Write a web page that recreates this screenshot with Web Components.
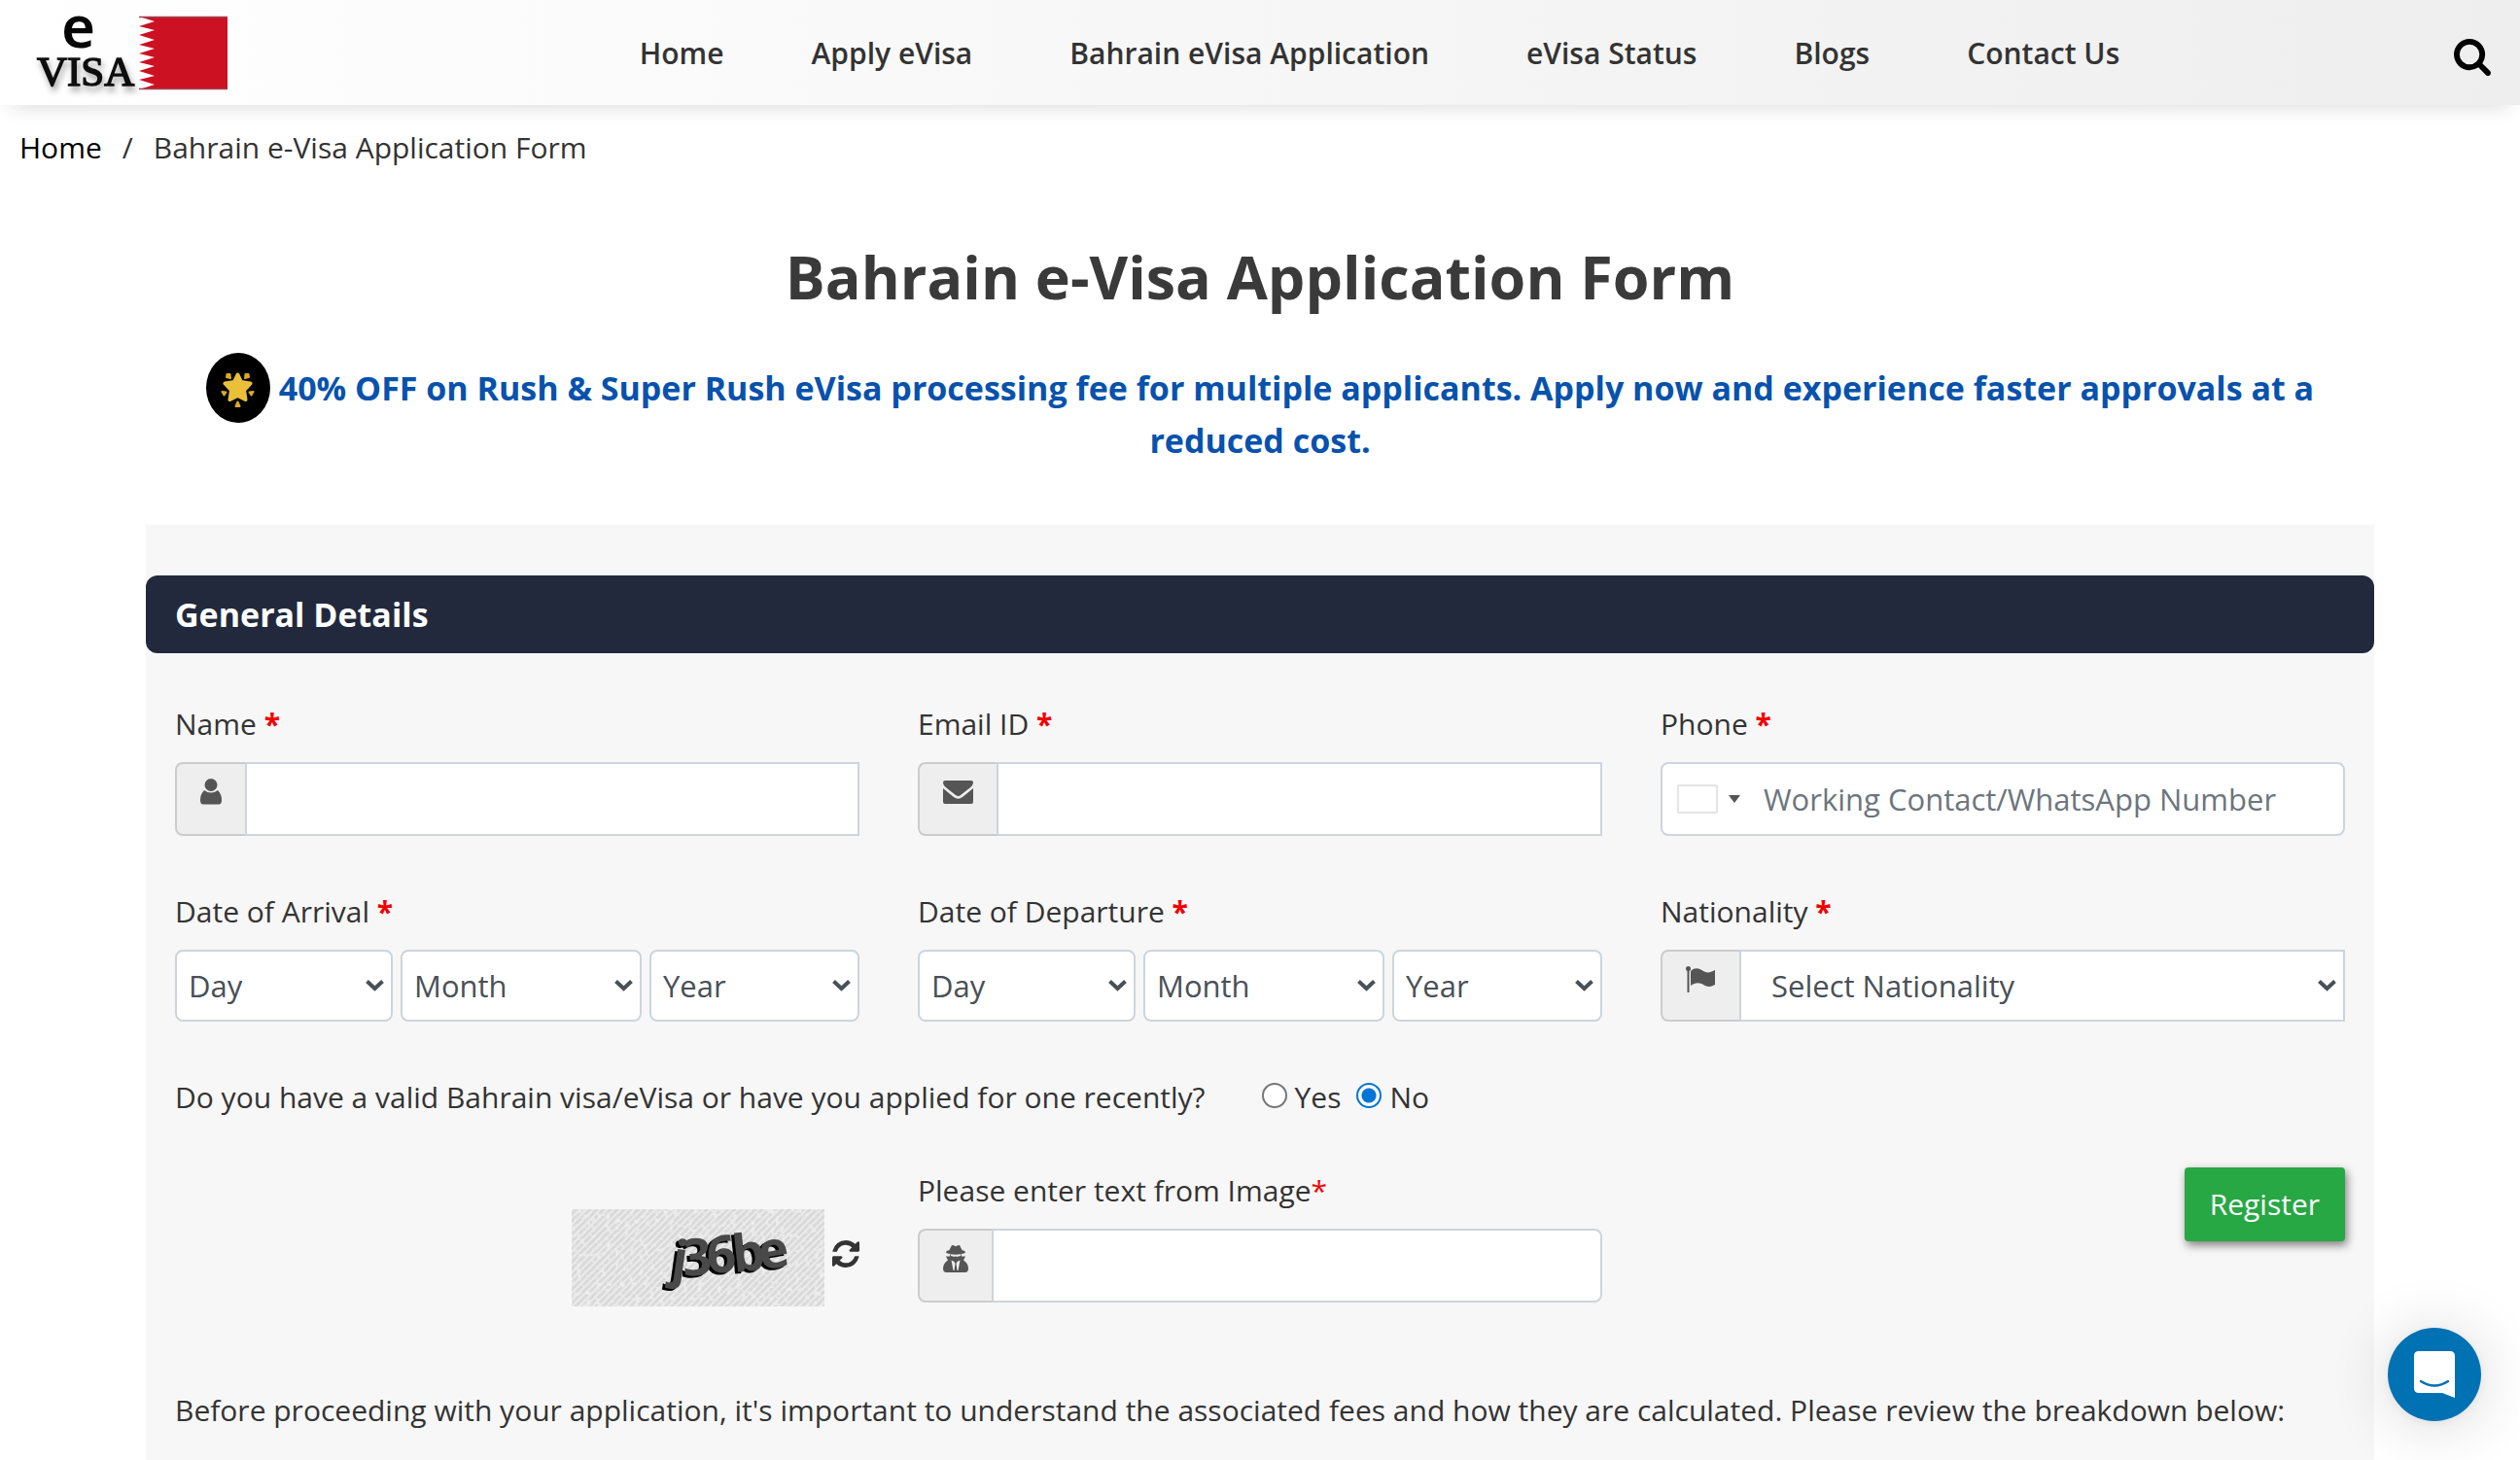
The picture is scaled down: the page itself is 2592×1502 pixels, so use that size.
<!DOCTYPE html>
<html lang="en">
<head>
<meta charset="utf-8">
<meta name="viewport" content="width=device-width, initial-scale=1">
<title>Bahrain e-Visa Application Form</title>
<style>
  :root {
    --ink: #333;
    --line: #ced4da;
    --field-ink: #495057;
    --text: 30px;
    --control: 31px;
    --lead: 34px;
    --red: #f00000;
  }
  body {
    margin: 0;
    background: #fff;
    color: var(--ink);
    font: 400 var(--text)/48px "Open Sans", "Noto Sans", sans-serif;
  }
</style>
</head>
<body>
<visa-page>
  <site-header slot="header"></site-header>
  <bread-crumb slot="crumb" current="Bahrain e-Visa Application Form"></bread-crumb>
  <promo-banner slot="promo">40% OFF on Rush &amp; Super Rush eVisa processing fee for multiple applicants. Apply now and experience faster approvals at a reduced cost.</promo-banner>
  <visa-form></visa-form>
  <chat-launcher slot="chat"></chat-launcher>
</visa-page>

<script>
const define = (name, markup, setup) => {
  const template = document.createElement('template');
  template.innerHTML = markup;
  customElements.define(name, class extends HTMLElement {
    constructor() {
      super();
      this.attachShadow({ mode: 'open' }).append(template.content.cloneNode(true));
    }
    connectedCallback() { if (setup) setup(this, this.shadowRoot); }
  });
};

const fieldStyles = `
  *, *::before { box-sizing: border-box; }
  :host { display: block; min-width: 0; }
  .label { display: block; margin-bottom: 15px; }
  .star { color: var(--red); font-weight: 700; }
  .group { display: flex; }
  .addon {
    display: flex; flex: none; justify-content: center; align-items: flex-start;
    padding: 15px 24px 0; background: #eee; color: #555;
    border: 2px solid #ccc; border-right: 0; border-radius: 8px 0 0 8px;
  }
  .addon svg, .addon ::slotted(svg) { display: block; fill: currentColor; }
  input, select {
    font: inherit; font-size: var(--control); color: var(--field-ink); background: #fff; margin: 0;
    border: 2px solid var(--line); border-radius: 8px; min-width: 0; width: 100%; height: 76px;
  }
  select { appearance: none; height: 74px; padding: 0 36px 0 12px; }
  .pick { display: grid; min-width: 0; align-items: center; }
  .pick > * { grid-area: 1 / 1; }
  .pick svg { justify-self: end; margin-right: 9px; pointer-events: none; }
`;
const chevron = `<svg width="19" height="12" viewBox="0 0 19 12" fill="none" stroke="#495057" stroke-width="4"><path d="M1.5 1.5 9.5 9 17.5 1.5"/></svg>`;

define('visa-page', `
  <style>
    :host { display: flex; flex-direction: column; min-height: 100vh; }
    main { display: flex; flex-direction: column; flex: 1; width: calc(100% - 80px); max-width: 2292px; margin: 0 auto; }
    h1 { margin: 70px 0 49px; text-align: center; font-size: 61px; line-height: 77px; font-weight: 700; color: #3a3a3a; }
    .body { display: flex; flex-direction: column; flex: 1; }
  </style>
  <slot name="header"></slot>
  <slot name="crumb"></slot>
  <main>
    <h1>Bahrain e-Visa Application Form</h1>
    <slot name="promo"></slot>
    <div class="body"><slot></slot></div>
  </main>
  <slot name="chat"></slot>
`);

define('site-header', `
  <style>
    :host { display: block; position: relative; }
    header {
      display: flex; align-items: center; height: 108px; padding: 0 30px 0 36px;
      background: linear-gradient(90deg, #fff, #eee);
      box-shadow: 0 12px 20px -12px rgba(0,0,0,.17);
    }
    .logo { display: block; flex: none; }
    .logo svg { display: block; overflow: visible; }
    nav { flex: 1; display: flex; justify-content: center; gap: 100px; padding: 2px 0 0 78px; }
    nav a { color: #333; text-decoration: none; font-weight: 600; white-space: nowrap; }
    nav a:first-child { margin-right: -10px; }
    button { flex: none; padding: 0; border: 0; background: none; margin-top: 10px; }
    button svg { display: block; }
  </style>
  <header>
    <a class="logo" href="#" aria-label="e Visa Bahrain">
      <svg width="200" height="108" viewBox="36 0 200 108">
        <defs><filter id="s" x="-20%" y="-20%" width="140%" height="160%"><feDropShadow dx="2" dy="5" stdDeviation="3" flood-opacity=".35"/></filter></defs>
        <text x="63" y="49" font-family="Noto Sans, sans-serif" font-size="60" font-weight="600" fill="#050505">e</text>
        <text x="38" y="88" font-family="Liberation Serif, serif" font-size="43" fill="#111" stroke="#111" stroke-width="1.5" filter="url(#s)">VISA</text>
        <path fill="#cb1122" d="M234 17H143L159 22 143 27 159 31 143 36 159 41 143 46 159 50 143 55 159 59 143 64 159 68 143 73 159 78 143 82 159 87 143 92H234z"/>
        <path stroke="#a04455" stroke-width="1.5" d="M143 17.5h91M143 91.5h91"/>
      </svg>
    </a>
    <nav aria-label="Main">
      <a href="#">Home</a><a href="#">Apply eVisa</a><a href="#">Bahrain eVisa Application</a><a href="#">eVisa Status</a><a href="#">Blogs</a><a href="#">Contact Us</a>
    </nav>
    <button type="button" aria-label="Search">
      <svg width="38" height="38" viewBox="64 128 1664 1664"><path d="M1216 832q0-185-131.5-316.5t-316.5-131.5-316.5 131.5-131.5 316.5 131.5 316.5 316.5 131.5 316.5-131.5 131.5-316.5zm512 832q0 52-38 90t-90 38q-54 0-90-38l-343-342q-179 124-399 124-143 0-273.5-55.5t-225-150-150-225-55.5-273.5 55.5-273.5 150-225 225-150 273.5-55.5 273.5 55.5 225 150 150 225 55.5 273.5q0 220-124 399l343 343q37 37 37 90z"/></svg>
    </button>
  </header>
`);

define('bread-crumb', `
  <style>
    :host { display: block; padding: 20px 20px 0; }
    ol { display: flex; flex-wrap: wrap; gap: 21px; margin: 0; padding: 0; list-style: none; }
    a { color: #000; text-decoration: none; }
  </style>
  <nav aria-label="Breadcrumb"><ol><li><a href="#">Home</a></li><li aria-hidden="true">/</li><li class="current"></li></ol></nav>
`, (host, root) => { root.querySelector('.current').textContent = host.getAttribute('current'); });

define('promo-banner', `
  <style>
    :host { display: block; margin: 0 0 60px; padding: 0 30px; text-align: center; }
    p { margin: 0; color: #0752ad; font-weight: 700; font-size: var(--lead); line-height: 54px; }
    svg { vertical-align: middle; margin: -19px 0 -11px; }
  </style>
  <p><svg width="66" height="72" viewBox="0 0 66 72" aria-hidden="true">
    <ellipse cx="33" cy="36" rx="33" ry="36"/>
    <path d="M32.500 22.500 36 30l9.500 1.500-6.500 7 1.500 9.500-8-4-8 4 1.500-9.500-6.500-7L29 30z" fill="#eac03a" stroke="#eac03a" stroke-width="4" stroke-linejoin="round"/>
    <g fill="#dba92a" stroke="#dba92a" stroke-width="2" stroke-linejoin="round"><path d="M21.500 22l3 0 .5 4-4-1zM43.500 22l-3 0-.5 4 4-1zM16.500 40l4 .5-2 3zM48.500 40l-4 .5 2 3zM32.500 50.500l2 4.500h-4z"/></g>
  </svg> <slot></slot></p>
`);

define('text-field', `
  <style>${fieldStyles}
    .group input { border-radius: 0; flex: 1; padding: 0 22px; }
    :host([rounded]) input { border-radius: 0 8px 8px 0; }
    :host([rounded]) .star { font-weight: 400; }
  </style>
  <label class="label" for="f"><span class="caption"></span><span class="gap"> </span><span class="star">*</span></label>
  <div class="group"><span class="addon"><slot name="icon"></slot></span><input id="f" type="text"></div>
`, (host, root) => {
  root.querySelector('.caption').textContent = host.getAttribute('label');
  if (host.hasAttribute('rounded')) root.querySelector('.gap').remove();
  root.querySelector('input').type = host.getAttribute('type') || 'text';
});

define('phone-field', `
  <style>${fieldStyles}
    .box { display: flex; align-items: center; height: 76px; border: 2px solid var(--line); border-radius: 8px; background: #fff; padding-left: 15px; }
    button { display: flex; align-items: center; gap: 11px; padding: 0; border: 0; background: none; }
    .flag { width: 42px; height: 30px; border: 2px solid #e4e4e4; border-radius: 2px; }
    .caret { border: 6px solid transparent; border-top: 8px solid #555; border-bottom: 0; }
    input { flex: 1; height: 100%; border: 0; padding: 0 20px 0 24px; background: none; }
    input::placeholder { color: #6c757d; opacity: 1; }
  </style>
  <label class="label" for="f">Phone <span class="star">*</span></label>
  <div class="box"><button type="button" aria-label="Country code"><span class="flag"></span><span class="caret"></span></button><input id="f" type="tel" placeholder="Working Contact/WhatsApp Number"></div>
`);

define('date-field', `
  <style>${fieldStyles}
    .dates { display: grid; grid-template-columns: 224fr 248fr 216fr; gap: 8px; }
  </style>
  <label class="label" for="d"><span class="caption"></span> <span class="star">*</span></label>
  <div class="dates">
    <span class="pick"><select id="d"><option>Day</option></select>${chevron}</span>
    <span class="pick"><select aria-label="Month"><option>Month</option></select>${chevron}</span>
    <span class="pick"><select aria-label="Year"><option>Year</option></select>${chevron}</span>
  </div>
`, (host, root) => { root.querySelector('.caption').textContent = host.getAttribute('label'); });

define('nationality-field', `
  <style>${fieldStyles}
    .pick { flex: 1; }
    select { border-radius: 0; padding-left: 31px; }
  </style>
  <label class="label" for="f">Nationality <span class="star">*</span></label>
  <div class="group">
    <span class="addon"><svg width="31" height="27" viewBox="0 0 31 27"><circle cx="2.500" cy="2.500" r="2.500"/><path d="M1.500 3h2v24h-2zM5 5c5-5 10-2 13 0s7 2 12-1v15c-5 3-9 2-12 0s-8-3-13 1z"/></svg></span>
    <span class="pick"><select id="f"><option>Select Nationality</option></select>${chevron}</span>
  </div>
`);

define('visa-question', `
  <style>
    :host { display: block; }
    fieldset { display: flex; flex-wrap: wrap; align-items: center; gap: 0 16px; margin: 0; padding: 0; border: 0; }
    legend { float: left; padding: 0 42px 0 0; }
    label { display: flex; align-items: center; gap: 8px; }
    input {
      appearance: none; box-sizing: border-box; width: 26px; height: 26px; margin: 0 0 4px;
      border: 2px solid #767676; border-radius: 50%; background: #fff;
    }
    input:checked { border-color: #0075d8; background: radial-gradient(circle, #0075d8 7px, #fff 8px); }
  </style>
  <fieldset>
    <legend>Do you have a valid Bahrain visa/eVisa or have you applied for one recently?</legend>
    <label><input type="radio" name="held">Yes</label>
    <label><input type="radio" name="held" checked>No</label>
  </fieldset>
`);

define('captcha-image', `
  <style>
    :host { display: flex; justify-content: flex-end; align-items: center; gap: 8px; padding-top: 43px; }
    svg { display: block; }
    button { padding: 0; border: 0; background: none; margin-bottom: 8px; }
  </style>
  <svg width="260" height="100" viewBox="0 0 260 100">
    <defs>
      <pattern id="p" width="5" height="5" patternUnits="userSpaceOnUse" patternTransform="rotate(45)"><rect width="5" height="5" fill="#d9d9d9"/><rect width="2" height="5" fill="#ebebeb"/></pattern>
      <filter id="n" x="0" y="0" width="100%" height="100%"><feTurbulence type="fractalNoise" baseFrequency=".2" numOctaves="2" seed="4"/><feColorMatrix values="0 0 0 0 .86 0 0 0 0 .86 0 0 0 0 .86 0 0 0 4 -2.100"/></filter>
      <filter id="b"><feGaussianBlur stdDeviation=".7"/></filter>
    </defs>
    <rect width="260" height="100" fill="url(#p)"/>
    <rect width="260" height="100" filter="url(#n)"/>
    <g font-family="Open Sans, sans-serif" font-weight="700" font-size="53" filter="url(#b)">
      <text fill="#000" x="98 112 137 164 192" y="71 71 68 67 65" rotate="8 -4 -4 -6 -10">j36be</text>
      <text fill="#484848" x="101 115 140 167 195" y="69 69 66 65 63" rotate="8 -4 -4 -6 -10" aria-hidden="true">j36be</text>
    </g>
  </svg>
  <button type="button" aria-label="Refresh image"><svg width="28" height="28" viewBox="128 128 1536 1536" fill="#333"><path d="M1639 1056q0 5-1 7-64 268-268 434.500t-478 166.500q-146 0-282.500-55t-243.500-157l-129 129q-19 19-45 19t-45-19-19-45v-448q0-26 19-45t45-19h448q26 0 45 19t19 45-19 45l-137 137q71 66 161 102t187 36q134 0 250-65t186-179q11-17 53-117 8-23 30-23h192q13 0 22.500 9.500t9.500 22.500zm25-800v448q0 26-19 45t-45 19h-448q-26 0-45-19t-19-45 19-45l138-138q-148-137-349-137-134 0-250 65t-186 179q-11 17-53 117-8 23-30 23h-199q-13 0-22.500-9.500t-9.500-22.500v-7q65-268 270-434.500t480-166.500q146 0 284 55.500t245 156.500l130-129q19-19 45-19t45 19 19 45z"/></svg></button>
`);

define('visa-form', `
  <style>
    :host { display: block; flex: 1; background: #f7f7f7; padding-top: 52px; }
    h2 { margin: 0 0 49px; padding: 13px 30px; border-radius: 12px; background: #22293c; color: #fff; font-size: var(--lead); line-height: 54px; font-weight: 700; }
    form { padding: 0 30px; }
    .row { display: grid; grid-template-columns: repeat(3, minmax(0, 1fr)); gap: 60px; margin-bottom: 54px; }
    .row.last { margin-bottom: 0; }
    visa-question { margin-bottom: 48px; }
    .register {
      justify-self: end; align-self: start; height: 76px; padding: 0 26px; border: 0; border-radius: 4px;
      background: #28a745; color: #fff; font: inherit; box-shadow: 2px 4px 10px rgba(0,0,0,.5);
    }
    p { margin: 83px 0 0; padding: 0 30px 28px; }
  </style>
  <h2>General Details</h2>
  <form onsubmit="return false">
    <div class="row">
      <text-field label="Name"><svg slot="icon" width="22" height="27" viewBox="1 0 22 27"><ellipse cx="12" cy="6.500" rx="6.500" ry="6.500"/><path d="M5 12q7 5 14 0 4 4 4 10 0 4.500-3 4.500H4q-3 0-3-4.500 0-6 4-10z"/></svg></text-field>
      <text-field label="Email ID" type="email"><svg slot="icon" width="31" height="27" viewBox="0 0 31 27"><path d="M2 2h27q2 0 2 2 0 3-4 6l-9 7q-2.500 2-5 0L4 10Q0 7 0 4 0 2 2 2zM0 10l11 9q4.500 3.500 9 0l11-9v14q0 2-2 2H2q-2 0-2-2z"/></svg></text-field>
      <phone-field></phone-field>
    </div>
    <div class="row">
      <date-field label="Date of Arrival"></date-field>
      <date-field label="Date of Departure"></date-field>
      <nationality-field></nationality-field>
    </div>
    <visa-question></visa-question>
    <div class="row last">
      <captcha-image></captcha-image>
      <text-field rounded label="Please enter text from Image"><svg slot="icon" width="26" height="28" viewBox="0 0 26 28"><path fill-rule="evenodd" d="M9 0q2 0 4 1.200Q15 0 17 0l2.500 5Q23 6 23 7q0 1.500-4.500 2 .5 2 .5 2.500h4l-2 4q5 3 5 8.500 0 4-3.500 4h-19Q0 28 0 24q0-5.500 5-8.500l-2-4h4q0-1 .5-2.500Q3 8.500 3 7q0-1 3.500-2zM8 9.300v1.700l4 1 1-.8 1 .8 4-1V9.300q-5 .7-10 0zM8.500 15.500 10.500 26h1l1-7-1-2zM17.500 15.500l-3 1.500-1 2 1 7h1z"/></svg></text-field>
      <button class="register">Register</button>
    </div>
  </form>
  <p>Before proceeding with your application, it's important to understand the associated fees and how they are calculated. Please review the breakdown below:</p>
`);

define('chat-launcher', `
  <style>
    :host { position: fixed; right: 40px; bottom: 40px; display: block; }
    button { display: block; width: 96px; height: 96px; padding: 0; border: 0; border-radius: 50%; background: #0071b2; box-shadow: 0 2px 12px rgba(0,0,0,.06), 0 4px 64px rgba(0,0,0,.16); }
    svg { display: block; margin: 0 auto; }
  </style>
  <button type="button" aria-label="Open chat"><svg width="42" height="48" viewBox="0 0 42 48"><path fill="#fff" d="M5 0h32q5 0 5 5v43l-13-5H5q-5 0-5-5V5q0-5 5-5z"/><path d="M7 31q14 9 28 0" fill="none" stroke="#0071b2" stroke-width="2.500" stroke-linecap="round"/></svg></button>
`);
</script>
</body>
</html>
